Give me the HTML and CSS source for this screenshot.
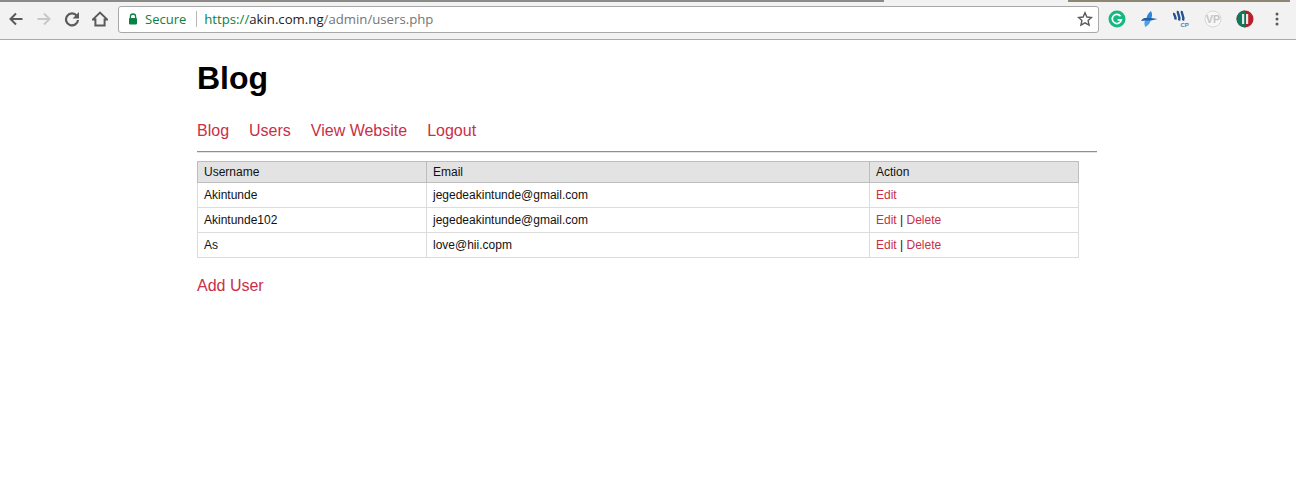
FILE: index.html
```html
<!DOCTYPE html>
<html lang="en">
<head>
<meta charset="utf-8">
<title>Blog</title>
<link rel="stylesheet" href="styles.css">
</head>
<body>
<header class="chrome">
  <div class="tabstrip"><div class="tabline"></div><div class="tab-active"></div><div class="tabline-right"></div></div>
  <div class="toolbar">
    <div class="navbtns">
      <svg class="nav-icon" viewBox="0 0 16 16"><path d="M14.500 8H2.500M8 2.500 2.500 8 8 13.500" fill="none" stroke="#5a5a5a" stroke-width="2"/></svg>
      <svg class="nav-icon" viewBox="0 0 16 16"><path d="M1.500 8h12M8 2.500 13.500 8 8 13.500" fill="none" stroke="#c8c8c8" stroke-width="2"/></svg>
      <svg class="nav-icon" viewBox="0 0 16 16"><path d="M12.800 4.800A6 6 0 1 0 14 9" fill="none" stroke="#5a5a5a" stroke-width="2.200"/><path d="M15 1v6.400H8.600z" fill="#5a5a5a"/></svg>
      <svg class="nav-icon" viewBox="0 0 16 16"><path d="M8 1.600 1 8.400h2.400v6h9.200v-6H15z" fill="none" stroke="#5a5a5a" stroke-width="2"/></svg>
    </div>
    <div class="omnibox">
      <svg class="lock" viewBox="0 0 10 12"><path d="M2.400 5V3.600a2.600 2.600 0 0 1 5.200 0V5" fill="none" stroke="#0b8043" stroke-width="1.300"/><rect x="1" y="5" width="8" height="6.400" rx=".8" fill="#0b8043"/></svg>
      <span class="secure">Secure</span>
      <span class="sep"></span>
      <span class="url"><span class="scheme">https://</span><span class="host">akin.com.ng</span><span class="path">/admin/users.php</span></span>
      <svg class="star" viewBox="0 0 16 16"><path d="m8 1.800 1.900 4.200 4.600.5-3.400 3.100 1 4.500L8 11.800l-4.100 2.300 1-4.500-3.400-3.100 4.600-.5z" fill="none" stroke="#5a5a5a" stroke-width="1.400"/></svg>
    </div>
    <div class="extensions">
      <svg class="ext" viewBox="0 0 18 18"><circle cx="9" cy="9" r="8.500" fill="#15b87f"/><path d="M12.600 6.200A4.600 4.600 0 1 0 13.400 9.800H9.600" fill="none" stroke="#fff" stroke-width="1.700"/></svg>
      <svg class="ext" viewBox="0 0 18 18"><path d="M6.500 9C6.500 6 8 3 11 1 12.800 4 12 7 11 9z" fill="#2f86d8"/><path d="M11 9C10.500 12 9 15 5.500 17 3.500 14 4.500 11 6 9z" fill="#4ea0e8"/><path d="M1 11C2.500 8.500 4 8 6 8L11 8 17.500 9 11 10.500 6 10.500z" fill="#1a5fa8"/></svg>
      <svg class="ext" viewBox="0 0 18 18"><path d="M2.200 3c-1 2.200 2.400 3.500 1 6.500M6 1c-1.300 2.800 2.700 4.500 1 9.500M10 1c-1.300 2.800 2.700 4.500 1 9.500" fill="none" stroke="#24508f" stroke-width="2.400"/><text class="ext-cp" x="8.500" y="17">CP</text></svg>
      <svg class="ext" viewBox="0 0 18 18"><circle cx="9" cy="9" r="8" fill="#f7f7f7" stroke="#d8d8d8"/><text class="ext-vp" x="9" y="12.700">VP</text></svg>
      <svg class="ext" viewBox="0 0 18 18"><circle cx="9" cy="9" r="8.500" fill="#b5202c"/><path d="M9 .5A8.500 8.500 0 0 0 9 17.500z" fill="#0e7a5a"/><rect x="6" y="4" width="2.200" height="10" fill="#e8e8e8"/><rect x="10" y="4" width="2.200" height="10" fill="#e8e8e8"/></svg>
      <svg class="ext" viewBox="0 0 18 18"><circle cx="9" cy="4" r="1.500" fill="#5a5a5a"/><circle cx="9" cy="9" r="1.500" fill="#5a5a5a"/><circle cx="9" cy="14" r="1.500" fill="#5a5a5a"/></svg>
    </div>
  </div>
</header>
<main class="page">
  <h1 class="title">Blog</h1>
  <nav class="menu-links">
    <a href="#">Blog</a>
    <a href="#">Users</a>
    <a href="#">View Website</a>
    <a href="#">Logout</a>
  </nav>
  <hr class="rule">
  <table class="users">
    <thead>
      <tr><th class="col-user">Username</th><th class="col-email">Email</th><th>Action</th></tr>
    </thead>
    <tbody>
      <tr><td>Akintunde</td><td>jegedeakintunde@gmail.com</td><td><a href="#">Edit</a></td></tr>
      <tr><td>Akintunde102</td><td>jegedeakintunde@gmail.com</td><td><a href="#">Edit</a> | <a href="#">Delete</a></td></tr>
      <tr><td>As</td><td>love@hii.copm</td><td><a href="#">Edit</a> | <a href="#">Delete</a></td></tr>
    </tbody>
  </table>
  <a class="add" href="#">Add User</a>
</main>
</body>
</html>
```
FILE: styles.css
```css
* { box-sizing: border-box; }
html, body { margin: 0; padding: 0; height: 100%; overflow: hidden; background: #fff; }
body { font-family: "Liberation Sans", Arial, sans-serif; color: #111; }
a { color: #c92f47; text-decoration: none; }

.chrome { height: 40px; background: #f2f2f2; border-bottom: 1px solid #a9a9a9; display: flex; flex-direction: column; }
.tabstrip { height: 2px; display: flex; }
.tabline { width: 884px; background: #8a8a86; }
.tab-active { width: 184px; background: #f2f2f2; }
.tabline-right { width: 222px; background: #8d8674; }
.toolbar { flex: 1; display: flex; align-items: center; padding: 0 9px 3px 8px; }
.navbtns { display: flex; gap: 12px; width: 110px; flex: none; }
.nav-icon { width: 16px; height: 16px; display: block; }
.omnibox { width: 981px; height: 27px; flex: none; background: #fff; border: 1px solid #a8a8a8; border-radius: 3px; display: flex; align-items: center; padding: 0 5px 0 9px; font-family: "Open Sans", "Liberation Sans", sans-serif; font-size: 13px; }
.lock { width: 10px; height: 12px; flex: none; }
.secure { color: #0b8043; margin-left: 7px; }
.sep { width: 1px; height: 16px; background: #b8b8b8; margin: 0 7px 0 10px; }
.url { flex: 1; white-space: nowrap; font-size: 13.2px; }
.scheme { color: #0b8043; }
.host { color: #222; }
.path { color: #757575; }
.star { width: 16px; height: 16px; flex: none; }
.extensions { display: flex; flex: 1; gap: 14px; align-items: center; padding-left: 9px; }
.ext { width: 18px; height: 18px; display: block; flex: none; }
.ext-cp { font-size: 6px; font-weight: bold; fill: #5f7aa5; }
.ext-vp { font-size: 10.500px; font-weight: bold; fill: #c4c4c4; text-anchor: middle; }

.page { width: 900px; margin-left: 197px; }
.title { font-size: 32px; line-height: 37px; font-weight: bold; margin: 20px 0 0; color: #000; }
.menu-links { display: flex; gap: 20px; margin-top: 25px; font-size: 16px; line-height: 18px; }
.rule { border: 0; border-top: 1px solid #8f8f8f; border-bottom: 1px solid #e4e4e4; margin: 11px 0 0; height: 2px; }
.users { width: 882px; border-collapse: collapse; table-layout: fixed; margin-top: 8px; font-size: 12px; }
.users th, .users td { border: 1px solid #dcdcdc; padding: 0 6px; height: 25px; text-align: left; font-weight: normal; }
.users th { background: #e3e3e3; border-color: #bdbdbd; height: 21px; }
.col-user { width: 229px; }
.col-email { width: 443px; }
.add { display: block; margin-top: 19px; font-size: 16px; line-height: 18px; }
```
